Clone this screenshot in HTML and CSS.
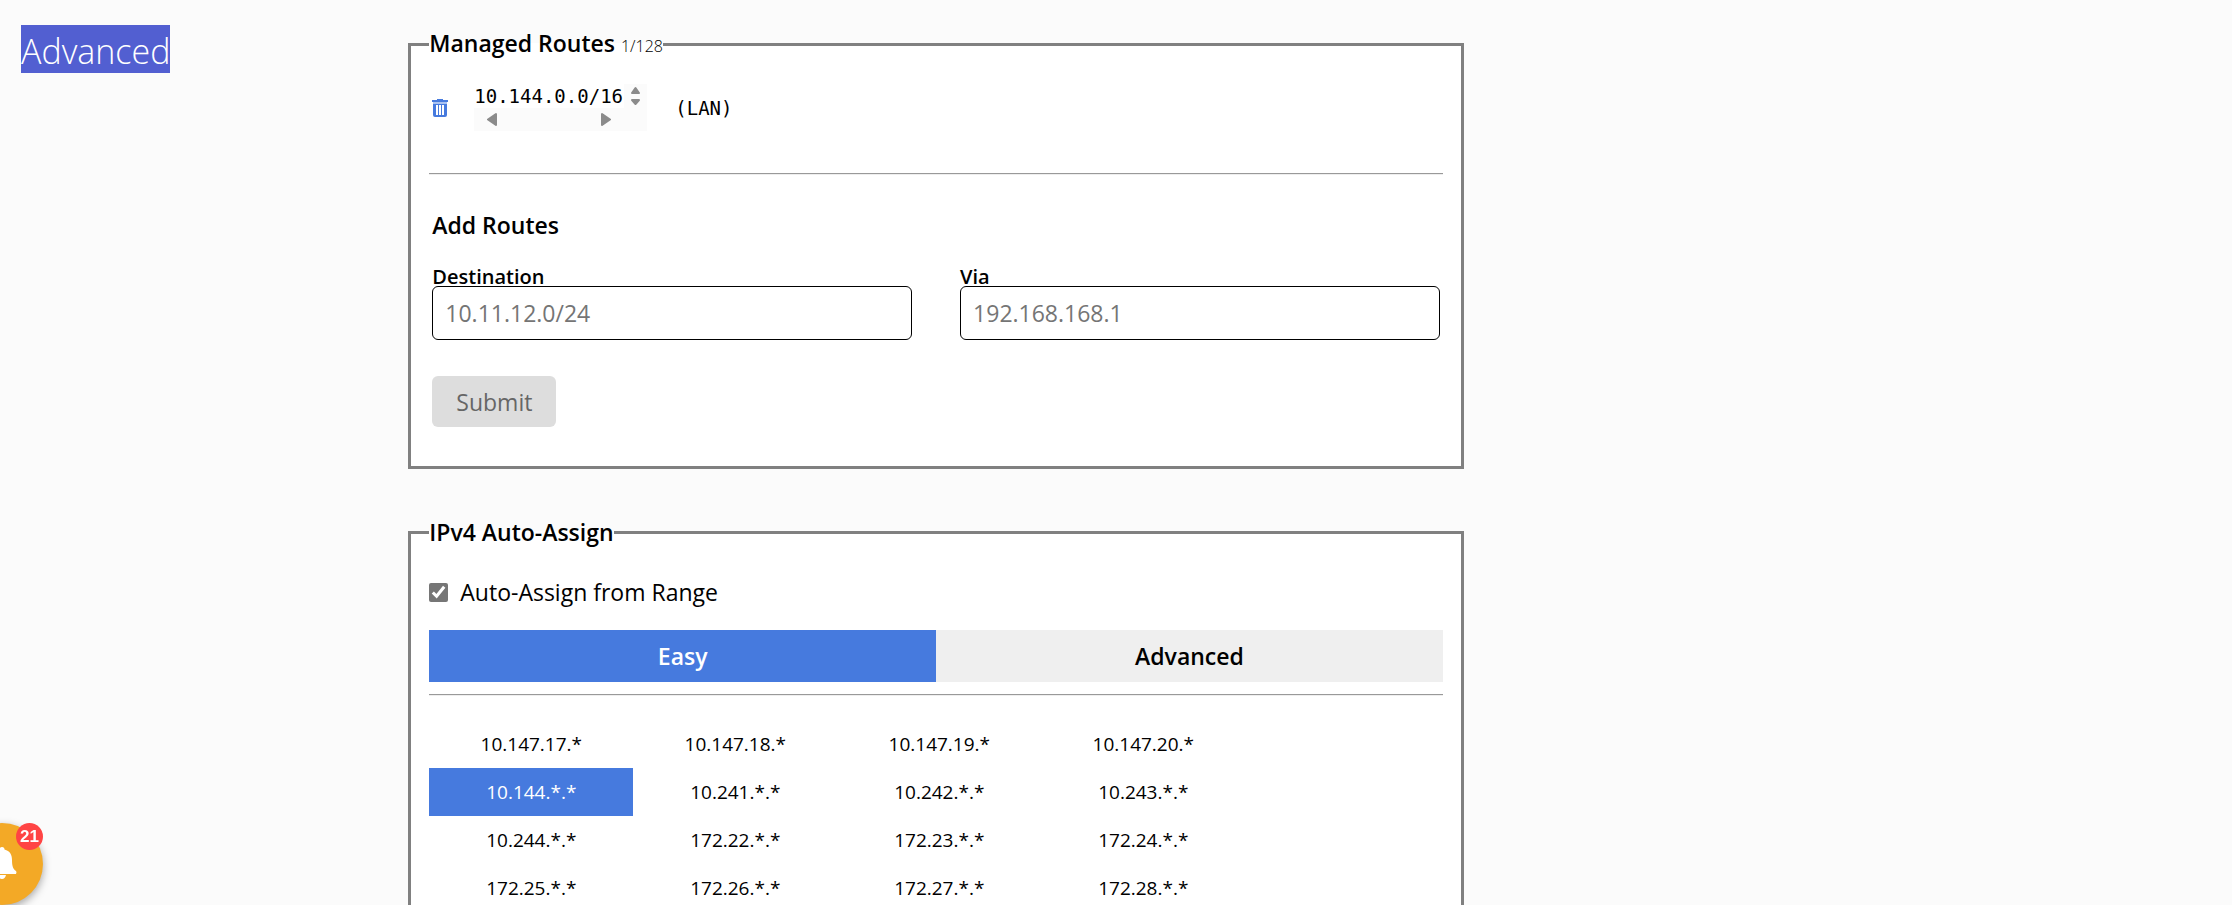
FILE: index.html
```html
<!DOCTYPE html>
<html lang="en">
<head>
<meta charset="utf-8">
<title>Advanced</title>
<link rel="stylesheet" href="styles.css">
</head>
<body>
<main class="page">
  <h1 class="page-title"><span class="selected">Advanced</span></h1>
  <div class="settings">
    <fieldset class="panel">
      <legend class="legend">Managed Routes <small class="count">1/128</small></legend>
      <div class="route">
        <button class="delete" type="button" aria-label="Delete route">
          <svg viewBox="0 0 16 18" width="16" height="18"><path fill="#467ade" d="M5 0h6v1h5v2H0V1h5z"/><path fill="#a9c2f1" d="M1 3h14v2H1z"/><path fill="#467ade" fill-rule="evenodd" d="M1 5h14v11q0 2-2 2H3q-2 0-2-2zM4 6v10h2V6zM7 6v10h2V6zM10 6v10h2V6z"/></svg>
        </button>
        <div class="target">
          <code class="target-text">10.144.0.0/16</code>
          <svg class="scroll-y" viewBox="0 0 23 24" width="23" height="24"><path d="M11.500 4 15 9H8zM11.500 20 15 16H8z"/></svg>
          <svg class="scroll-x" viewBox="0 0 173 23" width="173" height="23"><path d="M22 6v11l-8-5.500zM128 6v11l8-5.500z"/></svg>
        </div>
        <code class="via">(LAN)</code>
      </div>
      <hr class="rule">
      <form class="add-routes">
        <h2 class="subtitle">Add Routes</h2>
        <div class="fields">
          <div class="field">
            <label class="label" for="destination">Destination</label>
            <input class="input" id="destination" type="text" placeholder="10.11.12.0/24">
          </div>
          <div class="field">
            <label class="label" for="via">Via</label>
            <input class="input" id="via" type="text" placeholder="192.168.168.1">
          </div>
        </div>
        <button class="submit" type="submit" disabled>Submit</button>
      </form>
    </fieldset>
    <fieldset class="panel">
      <legend class="legend">IPv4 Auto-Assign</legend>
      <label class="check"><input class="checkbox" type="checkbox" checked> Auto-Assign from Range</label>
      <div class="tabs">
        <button class="tab active" type="button">Easy</button>
        <button class="tab" type="button">Advanced</button>
      </div>
      <hr class="rule">
      <table class="ranges">
        <tbody>
          <tr><td>10.147.17.*</td><td>10.147.18.*</td><td>10.147.19.*</td><td>10.147.20.*</td></tr>
          <tr><td class="active">10.144.*.*</td><td>10.241.*.*</td><td>10.242.*.*</td><td>10.243.*.*</td></tr>
          <tr><td>10.244.*.*</td><td>172.22.*.*</td><td>172.23.*.*</td><td>172.24.*.*</td></tr>
          <tr><td>172.25.*.*</td><td>172.26.*.*</td><td>172.27.*.*</td><td>172.28.*.*</td></tr>
        </tbody>
      </table>
    </fieldset>
  </div>
</main>
<button class="bell" type="button" aria-label="Notifications">
  <svg viewBox="0 0 32 34" width="32" height="34"><path fill="#fff" d="M16 0q2.500 0 2.500 2.600C24 4 26 8 26 13c0 6 1 9 4 11q1 1 0 3H2q-1-2 0-3c3-2 4-5 4-11C6 8 8 4 13.500 2.600Q13.500 0 16 0zM12 28h8q-1 4-4 4t-4-4z"/></svg>
  <span class="badge">21</span>
</button>
</body>
</html>
```
FILE: styles.css
```css
* {
  box-sizing: border-box;
}

body {
  margin: 0;
  height: 100vh;
  overflow: hidden;
  background: #fbfbfb;
  color: #000;
  font: 23px/32px "Open Sans", "Noto Sans", sans-serif;
}

button,
input {
  font: inherit;
  color: inherit;
}

.page {
  display: grid;
  grid-template-columns: 17% 48.2% 1fr;
  padding: 25px 21px 0;
  column-gap: 15px;
}

.page-title {
  margin: 0;
  font-size: 34px;
  font-weight: 300;
  line-height: 44px;
}

.selected {
  display: inline-block;
  padding-top: 4px;
  background: #525fd1;
  color: #fff;
}

.settings {
  display: flex;
  flex-direction: column;
  gap: 45px;
}

.panel {
  min-width: 0;
  margin: 0;
  padding: 0 18px 39px;
  border: 3px solid #808080;
  background: #fff;
}

.legend {
  padding: 0;
  font-size: 23px;
  font-weight: 600;
  line-height: 36px;
}

.count {
  font-size: 16px;
  font-weight: 300;
}

.route {
  display: flex;
  align-items: center;
  padding: 20px 3px 0;
}

.delete {
  display: flex;
  padding: 0;
  border: 0;
  background: none;
}

.target {
  display: grid;
  grid-template-columns: 150px 23px;
  margin: 0 28px 0 26px;
}

.target-text,
.via {
  font: 19px/24px "DejaVu Sans Mono", monospace;
}

.scroll-y,
.scroll-x {
  background: #fbfbfb;
  fill: #8b8b8b;
  stroke: #8b8b8b;
  stroke-width: 2px;
  stroke-linejoin: round;
}

.scroll-x {
  grid-column: 1 / 3;
}

.rule {
  height: 2px;
  margin: 0;
  border: 0;
  border-top: 1px solid #999;
  border-bottom: 1px solid #eee;
}

.route + .rule {
  margin-top: 42px;
}

.add-routes {
  padding: 34px 3px 0;
}

.subtitle {
  margin: 0 0 27px;
  font-size: 23px;
  font-weight: 600;
  line-height: 32px;
}

.fields {
  display: grid;
  grid-template-columns: 1fr 1fr;
  gap: 48px;
}

.label {
  display: block;
  font-size: 20px;
  font-weight: 600;
  line-height: 18px;
}

.input {
  display: block;
  width: 100%;
  height: 54px;
  padding: 0 12px;
  border: 1px solid #000;
  border-radius: 6px;
  background: #fff;
}

.input::placeholder {
  color: #757575;
}

.submit {
  display: block;
  height: 51px;
  margin-top: 36px;
  padding: 0 24px;
  border: 0;
  border-radius: 6px;
  background: #ddd;
  color: #666;
}

.check {
  display: flex;
  align-items: center;
  gap: 12px;
  margin: 26px 0 22px;
}

.checkbox {
  width: 19px;
  height: 19px;
  margin: 0;
  accent-color: #767676;
}

.tabs {
  display: grid;
  grid-template-columns: 1fr 1fr;
  margin-bottom: 12px;
}

.tab {
  height: 52px;
  border: 0;
  background: #efefef;
  font-weight: 600;
}

.tab.active,
.ranges .active {
  background: #467ade;
  color: #fff;
}

.ranges {
  margin-top: 24px;
  border-collapse: collapse;
  font-size: 19px;
}

.ranges td {
  width: 204px;
  height: 48px;
  padding: 0;
  text-align: center;
}

.bell {
  position: fixed;
  left: -39px;
  bottom: 0;
  display: flex;
  align-items: center;
  justify-content: center;
  width: 82px;
  height: 82px;
  padding: 0;
  border: 0;
  border-radius: 50%;
  background: #f3a926;
  box-shadow: 0 3px 9px rgba(0, 0, 0, 0.35);
}

.badge {
  position: absolute;
  top: 0;
  right: 0;
  width: 27px;
  height: 27px;
  border-radius: 50%;
  background: #ff4444;
  color: #fff;
  font: bold 17px/27px "Liberation Sans", sans-serif;
  text-align: center;
}
```
